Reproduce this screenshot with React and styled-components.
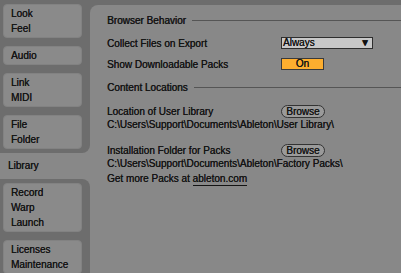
import React from "react";
import styled, { createGlobalStyle } from "styled-components";

const GlobalStyle = createGlobalStyle`
  html, body {
    margin: 0;
    padding: 0;
    background: #6d6d6d;
  }
  body {
    font-family: "Liberation Sans", Arial, sans-serif;
    font-size: 10px;
    color: #141414;
    text-shadow: 0.15px 0 0 #141414;
  }
`;

const Page = styled.div`
  display: flex;
  width: 401px;
  height: 273px;
  overflow: hidden;
  background: #6d6d6d;
`;

const Sidebar = styled.div`
  width: 90px;
  display: flex;
  flex-direction: column;
  background: #888888;
`;

const TabBlock = styled.div`
  display: flex;
  flex-direction: column;
  gap: 8px;
  padding: ${(p) => (p.$bottom ? "4px 8px 5px 3px" : "4px 8px 4px 3px")};
  background: #6d6d6d;
  border-bottom-right-radius: ${(p) => (p.$bottom ? "0" : "8px")};
  border-top-right-radius: ${(p) => (p.$bottom ? "8px" : "0")};
  flex: ${(p) => (p.$bottom ? "1" : "none")};
`;

const Tab = styled.div`
  background: #8a8a8a;
  border: 1px solid #828282;
  border-radius: 4px;
  padding: 1px 0 1px 7px;
  line-height: 15px;
`;

const ActiveTab = styled.div`
  height: 26px;
  line-height: 26px;
  padding-left: 8px;
`;

const Panel = styled.div`
  flex: 1;
  margin-top: 5px;
  background: #888888;
  border-top-left-radius: 8px;
  padding: 8px 0 0 17px;
`;

const SectionHeader = styled.div`
  display: flex;
  align-items: center;
  gap: 6px;
  height: 14px;
  margin-top: ${(p) => p.$mt || 0}px;
  text-shadow: 0.4px 0 0 #141414;
  white-space: nowrap;

  &::after {
    content: "";
    flex: 1;
    height: 1px;
    background: #555555;
  }
`;

const Row = styled.div`
  display: grid;
  grid-template-columns: 174px auto;
  align-items: center;
  height: 14px;
  margin-top: ${(p) => p.$mt || 0}px;
  white-space: nowrap;
`;

const Line = styled.div`
  height: ${(p) => p.$h || 14}px;
  line-height: ${(p) => p.$h || 14}px;
  white-space: nowrap;
`;

const Select = styled.div`
  width: 87px;
  height: 10px;
  border: 1px solid #2e2e2e;
  background: #c8c8c8;
  display: flex;
  align-items: center;
  justify-content: space-between;
  padding: 0 2px 0 1px;
  line-height: 10px;
`;

const Arrow = styled.span`
  font-size: 10px;
  color: #111;
`;

const Toggle = styled.div`
  width: 41px;
  height: 10px;
  border: 1px solid #3a3a3a;
  background: #fdae2f;
  text-align: center;
  line-height: 10px;
`;

const Pill = styled.div`
  width: 42px;
  height: 11px;
  border: 1px solid #333333;
  border-radius: 7px;
  background: #9a9a9a;
  text-align: center;
  line-height: 11px;
`;

const Link = styled.span`
  border-bottom: 1px solid #141414;
  padding-bottom: 1px;
`;

export default function App() {
  return (
    <Page>
      <GlobalStyle />
      <Sidebar>
        <TabBlock>
          <Tab>Look<br />Feel</Tab>
          <Tab>Audio</Tab>
          <Tab>Link<br />MIDI</Tab>
          <Tab>File<br />Folder</Tab>
        </TabBlock>
        <ActiveTab>Library</ActiveTab>
        <TabBlock $bottom>
          <Tab>Record<br />Warp<br />Launch</Tab>
          <Tab>Licenses<br />Maintenance</Tab>
        </TabBlock>
      </Sidebar>
      <Panel>
        <SectionHeader>Browser Behavior</SectionHeader>
        <Row $mt={9}>
          <span>Collect Files on Export</span>
          <Select>
            <span>Always</span>
            <Arrow>▼</Arrow>
          </Select>
        </Row>
        <Row $mt={7}>
          <span>Show Downloadable Packs</span>
          <Toggle>On</Toggle>
        </Row>
        <SectionHeader $mt={9}>Content Locations</SectionHeader>
        <Row $mt={10}>
          <span>Location of User Library</span>
          <Pill>Browse</Pill>
        </Row>
        <Line>C:\Users\Support\Documents\Ableton\User Library\</Line>
        <Row $mt={11}>
          <span>Installation Folder for Packs</span>
          <Pill>Browse</Pill>
        </Row>
        <Line>C:\Users\Support\Documents\Ableton\Factory Packs\</Line>
        <Line $h={15}>
          Get more Packs at <Link>ableton.com</Link>
        </Line>
      </Panel>
    </Page>
  );
}
